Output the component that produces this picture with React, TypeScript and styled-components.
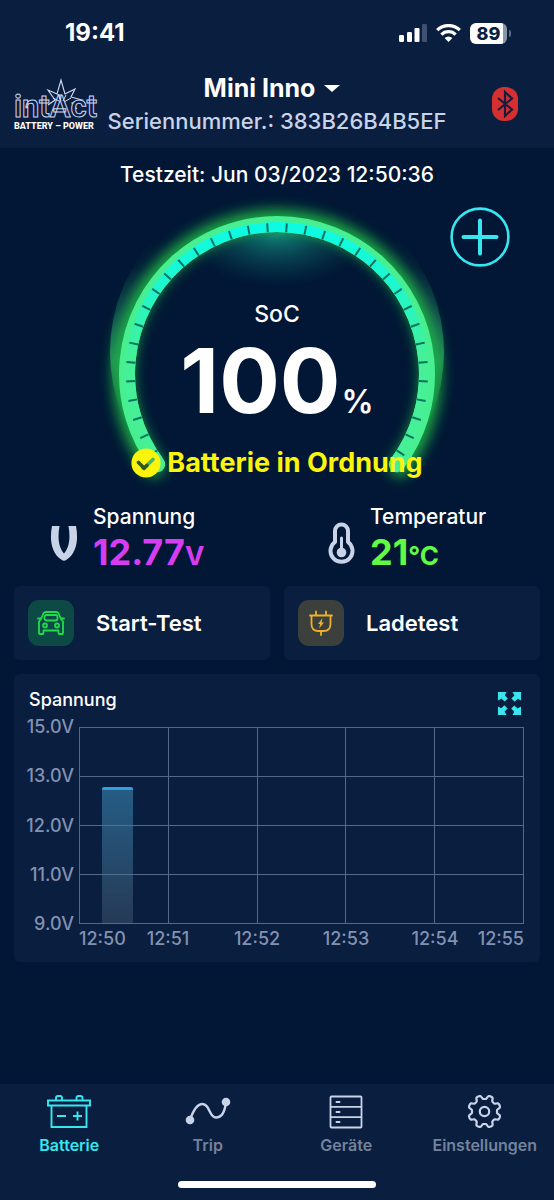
import React from "react";
import styled, { createGlobalStyle } from "styled-components";

const c = {
  page: "#011735",
  panel: "#0a1e40",
  cyan: "#37e6ef",
  soft: "#c9d3e8",
  axis: "#8391b0",
  grid: "#56678a",
  muted: "#74829b",
};

const Global = createGlobalStyle`
  *, *::before, *::after { box-sizing: border-box; }
  body { margin: 0; background: ${c.page}; }
  button { font: inherit; color: inherit; background: none; border: 0; padding: 0; cursor: pointer; }
  h1, h2, p, dl, dt, dd { margin: 0; font: inherit; }
  svg { display: block; flex: none; }
`;

const Screen = styled.div`
  min-height: 100vh;
  display: flex;
  flex-direction: column;
  background: ${c.page};
  color: #fff;
  font-family: Inter, "Liberation Sans", sans-serif;
`;

/* ---------- header ---------- */

const Header = styled.header`
  background: ${c.panel};
  border-bottom: 1px solid #04142d;
  padding-bottom: 11px;
`;

const StatusBar = styled.div`
  display: flex;
  align-items: center;
  justify-content: space-between;
  padding: 16px 43px 0 65px;
  height: 50px;
`;

const Clock = styled.time`
  font-size: 24px;
  line-height: 28px;
  font-weight: 700;
`;

const StatusIcons = styled.div`
  display: flex;
  align-items: center;
  gap: 9px;
`;

const BatteryLevel = styled.div`
  display: flex;
  align-items: center;
  gap: 2px;
`;

const BatteryBody = styled.span`
  width: 37px;
  height: 21px;
  border-radius: 6px;
  background: linear-gradient(90deg, #fff 89%, #8b95a9 89%);
  color: ${c.panel};
  font-size: 18px;
  line-height: 21px;
  font-weight: 800;
  text-align: center;
`;

const BatteryTip = styled.span`
  width: 2px;
  height: 7px;
  border-radius: 0 2px 2px 0;
  background: #5d6b87;
`;

const HeaderRow = styled.div`
  display: grid;
  grid-template-columns: minmax(0, 1fr) auto minmax(0, 1fr);
  align-items: center;
  padding: 21px 14px 0;
`;

const Titles = styled.div`
  display: flex;
  flex-direction: column;
  align-items: center;
`;

const DevicePicker = styled.button`
  display: flex;
  align-items: center;
  gap: 9px;
  margin-right: 10px;
  font-size: 25px;
  line-height: 34px;
  font-weight: 700;
`;

const Serial = styled.p`
  font-size: 22px;
  line-height: 32px;
  font-weight: 500;
  color: ${c.soft};
  white-space: nowrap;
`;

const BluetoothButton = styled.button`
  justify-self: end;
  margin-right: 22px;
`;

/* ---------- gauge ---------- */

const Hero = styled.section`
  position: relative;
  display: flex;
  flex-direction: column;
  align-items: center;
`;

const TestTime = styled.p`
  padding: 12px 0 1px;
  font-size: 21px;
  line-height: 28px;
  font-weight: 500;
`;

const AddButton = styled.button`
  position: absolute;
  top: 58px;
  right: 44px;
`;

const Gauge = styled.div`
  display: grid;
  justify-items: center;
  & > * { grid-area: 1 / 1; }
`;

const Reading = styled.div`
  display: flex;
  flex-direction: column;
  align-items: center;
  padding-top: 109px;
`;

const ReadingLabel = styled.h1`
  font-size: 23px;
  line-height: 30px;
  font-weight: 500;
`;

const ReadingValue = styled.p`
  display: flex;
  align-items: baseline;
  gap: 1px;
  font-size: 90px;
  line-height: 104px;
  font-weight: 700;
`;

const Percent = styled.span`
  font-size: 32px;
  line-height: 32px;
  font-weight: 600;
`;

const Health = styled.p`
  display: flex;
  align-items: center;
  gap: 6px;
  margin-top: 12px;
  color: #fbf50d;
  font-size: 27px;
  line-height: 36px;
  font-weight: 700;
`;

/* ---------- metrics ---------- */

const Metrics = styled.dl`
  display: grid;
  grid-template-columns: 1fr 1fr;
  padding-top: 14px;
`;

const Metric = styled.div`
  display: grid;
  grid-template-columns: 28px 1fr;
  column-gap: 15px;
  align-items: center;
  padding-left: 50px;
  & > svg { grid-row: 1 / 3; margin-top: 6px; }
`;

const MetricLabel = styled.dt`
  font-size: 21px;
  line-height: 26px;
  font-weight: 500;
`;

const MetricValue = styled.dd<{ $color: string }>`
  color: ${(p) => p.$color};
  font-size: 36px;
  line-height: 44px;
  font-weight: 700;
`;

const Unit = styled.span`
  font-size: 26px;
`;

/* ---------- cards ---------- */

const Content = styled.div`
  display: flex;
  flex-direction: column;
  gap: 14px;
  padding: 8px 14px 24px;
`;

const Actions = styled.div`
  display: grid;
  grid-template-columns: 1fr 1fr;
  gap: 14px;
`;

const ActionCard = styled.button`
  display: flex;
  align-items: center;
  gap: 22px;
  padding: 14px;
  border-radius: 6px;
  background: ${c.panel};
  font-size: 22px;
  line-height: 28px;
  font-weight: 600;
`;

const IconTile = styled.span<{ $bg: string }>`
  display: grid;
  place-items: center;
  width: 46px;
  height: 46px;
  border-radius: 11px;
  background: ${(p) => p.$bg};
`;

const ChartCard = styled.section`
  border-radius: 6px;
  background: ${c.panel};
  padding: 14px 16px 13px 15px;
`;

const ChartHead = styled.div`
  display: flex;
  justify-content: space-between;
  height: 39px;
`;

const ChartTitle = styled.h2`
  font-size: 18px;
  line-height: 24px;
  font-weight: 500;
`;

const ExpandButton = styled.button`
  align-self: flex-start;
  margin: 4px 3px 0 0;
`;

const ChartBody = styled.div`
  display: grid;
  grid-template-columns: 45px minmax(0, 1fr);
  column-gap: 5px;
`;

const YAxis = styled.div`
  display: flex;
  flex-direction: column;
  justify-content: space-between;
  align-items: flex-end;
  margin: -10px 0;
`;

const Tick = styled.span`
  font-size: 18px;
  line-height: 20px;
  font-weight: 500;
  color: ${c.axis};
`;

const Plot = styled.div`
  position: relative;
  display: grid;
  grid-template-columns: repeat(5, 1fr);
  grid-auto-rows: 49px;
  border-top: 1px solid ${c.grid};
  border-left: 1px solid ${c.grid};
`;

const Cell = styled.span`
  border-right: 1px solid ${c.grid};
  border-bottom: 1px solid ${c.grid};
`;

const Bar = styled.span`
  position: absolute;
  left: 5%;
  bottom: 0;
  width: 7%;
  height: 70%;
  border-top: 3px solid #2f9fe0;
  border-radius: 2px 2px 0 0;
  background: linear-gradient(rgba(55, 130, 175, 0.62), rgba(90, 110, 125, 0.35));
`;

const XAxis = styled.div`
  grid-column: 2;
  display: grid;
  grid-template-columns: minmax(0, 1fr) repeat(4, minmax(0, 2fr)) minmax(0, 1fr);
  justify-items: center;
  padding-top: 5px;
  & > :first-child { justify-self: start; }
  & > :last-child { justify-self: end; }
`;

/* ---------- navigation ---------- */

const Nav = styled.nav`
  margin-top: auto;
  background: ${c.panel};
  padding: 9px 0 12px;
`;

const NavItems = styled.div`
  display: grid;
  grid-template-columns: repeat(4, 1fr);
`;

const NavLink = styled.a<{ $active?: boolean }>`
  display: flex;
  flex-direction: column;
  align-items: center;
  gap: 6px;
  color: ${(p) => (p.$active ? c.cyan : c.muted)};
  font-size: 16px;
  line-height: 20px;
  font-weight: 600;
  text-decoration: none;
`;

const HomeIndicator = styled.div`
  width: 198px;
  height: 7px;
  margin: 26px auto 0;
  border-radius: 4px;
  background: #fff;
`;

/* ---------- drawings ---------- */

const Signal = () => (
  <svg width="28" height="18" viewBox="0 0 28 18" fill="#fff" aria-hidden="true">
    <rect x="0" y="11" width="5" height="7" rx="1.3" />
    <rect x="8" y="8" width="5" height="10" rx="1.3" />
    <rect x="15.500" y="4" width="5" height="14" rx="1.3" />
    <rect x="23" y="0" width="5" height="18" rx="1.3" fill="#3f5070" />
  </svg>
);

const Wifi = () => (
  <svg width="25" height="18" viewBox="0 0 25 18" fill="none" stroke="#fff" strokeWidth="3.2" aria-hidden="true">
    <path d="M1.200 6.200a16 16 0 0 1 22.600 0" />
    <path d="M5.400 10.600a10 10 0 0 1 14.200 0" />
    <path d="M12.500 18 8.600 14a5.600 5.600 0 0 1 7.800 0z" fill="#fff" stroke="none" />
  </svg>
);

const Logo = () => (
  <svg width="84" height="52" viewBox="0 0 84 52" role="img" aria-label="intAct Battery-Power">
    <path
      d="M34 27 L41 22 L34 12 L43 16 L47 2 L51 16 L61 11 L57 19 L68 22 L58 25 L63 31"
      fill="none"
      stroke="#d3def5"
      strokeWidth="1.100"
    />
    <text
      x="0"
      y="39"
      fontFamily="Roboto, 'Liberation Sans', sans-serif"
      fontSize="31"
      fontWeight="600"
      fill={c.panel}
      stroke="#c6d3ee"
      strokeWidth="1"
    >
      intAct
    </text>
    <path d="M39 20 45 23M44 16l3 7M52 17l-3 6M57 20l-7 4" fill="none" stroke="#d3def5" strokeWidth="1" />
    <text x="0" y="51" fontFamily="Roboto, sans-serif" fontSize="9" fontWeight="800" fill="#fff">
      BATTERY – POWER
    </text>
  </svg>
);

const Bluetooth = () => (
  <svg width="26" height="34" viewBox="0 0 26 34" aria-hidden="true">
    <rect width="26" height="34" rx="12" fill="#d5302f" />
    <path d="M6 11 20 22.500 13 29V5l7 6.500L6 23" fill="none" stroke="#1b1c3d" strokeWidth="2.200" />
  </svg>
);

const Add = () => (
  <svg width="60" height="60" viewBox="0 0 60 60" fill="none" stroke={c.cyan} strokeLinecap="round" aria-hidden="true">
    <circle cx="30" cy="30" r="28.400" strokeWidth="2.600" />
    <path d="M30 13.500v33M13.500 30h33" strokeWidth="4" />
  </svg>
);

const CX = 190;
const CY = 184;
const SWEEP = 127;
const STEP = 52 / 7;

const polar = (r: number, deg: number) => {
  const a = (deg * Math.PI) / 180;
  return `${(CX + r * Math.sin(a)).toFixed(2)} ${(CY - r * Math.cos(a)).toFixed(2)}`;
};

const arc = (r: number, sweep: number) =>
  `M${polar(r, -sweep)} A${r} ${r} 0 ${sweep > 90 ? 1 : 0} 1 ${polar(r, sweep)}`;

const GaugeArc = () => (
  <svg width="380" height="300" viewBox="0 0 380 300" fill="none" aria-hidden="true">
    <defs>
      <linearGradient id="segments" gradientUnits="userSpaceOnUse" x1="0" y1="30" x2="0" y2="190">
        <stop offset="0" stopColor="#0cfbe4" />
        <stop offset="0.400" stopColor="#1df7cf" />
        <stop offset="0.850" stopColor="#45f096" />
      </linearGradient>
      <linearGradient id="halo" gradientUnits="userSpaceOnUse" x1="0" y1="50" x2="0" y2="270">
        <stop offset="0" stopColor="#2fb56b" stopOpacity="0" />
        <stop offset="0.120" stopColor="#2f9a78" stopOpacity="0.040" />
        <stop offset="0.300" stopColor="#2f9a78" stopOpacity="0.300" />
        <stop offset="0.550" stopColor="#2fb56b" stopOpacity="0.700" />
        <stop offset="0.800" stopColor="#1f9a4f" stopOpacity="0.200" />
        <stop offset="1" stopColor="#1f9a4f" stopOpacity="0" />
      </linearGradient>
      <radialGradient id="topLight">
        <stop offset="0" stopColor="#19b59b" stopOpacity="0.700" />
        <stop offset="1" stopColor="#0b5c62" stopOpacity="0" />
      </radialGradient>
      <filter id="glow" filterUnits="userSpaceOnUse" x="0" y="0" width="380" height="300">
        <feGaussianBlur stdDeviation="7" />
      </filter>
      <clipPath id="inside">
        <circle cx={CX} cy={CY} r="150" />
      </clipPath>
    </defs>
    <path
      fillRule="evenodd"
      fill="url(#halo)"
      d="M23 162a167 167 0 1 0 334 0a167 167 0 1 0-334 0zM32 184a158 158 0 1 0 316 0a158 158 0 1 0-316 0z"
    />
    <ellipse cx={CX} cy="42" rx="95" ry="55" fill="url(#topLight)" clipPath="url(#inside)" />
    <path d={arc(154, SWEEP)} stroke="#1fb045" strokeWidth="20" strokeLinecap="round" filter="url(#glow)" />
    <path d={arc(150, SWEEP)} stroke="#48ef90" strokeWidth="16" strokeLinecap="round" />
    <path d={arc(147, SWEEP - 1)} stroke="url(#segments)" strokeWidth="10" />
    {Array.from({ length: 34 }, (_, i) => {
      const deg = (i - 16.5) * STEP;
      return <path key={i} d={`M${polar(142, deg)} L${polar(151, deg)}`} stroke="#08715f" strokeWidth="2" />;
    })}
  </svg>
);

const Check = () => (
  <svg width="30" height="30" viewBox="0 0 30 30" aria-hidden="true">
    <circle cx="15" cy="15" r="14.600" fill="#fbf50d" />
    <path d="M7.500 14.500 13 20" fill="none" stroke="#2f5a1c" strokeWidth="3.600" strokeLinecap="round" />
    <path d="M13 20 22 11.500" fill="none" stroke="#43b866" strokeWidth="3.600" strokeLinecap="round" />
    <path d="M12 19.500 13 20.200 16 17.400" fill="none" stroke="#2f5a1c" strokeWidth="3.600" strokeLinecap="round" />
  </svg>
);

const VoltIcon = () => (
  <svg width="28" height="44" viewBox="0 0 28 44" fill={c.soft} aria-hidden="true">
    <path d="M2 4h7.500C8 13 7.500 24 14 31.500C20.500 24 20 13 18.500 4H26C28.500 17 27 31 16.500 37.800Q14 39.500 11.500 37.800C1 31-.5 17 2 4z" />
  </svg>
);

const Thermometer = () => (
  <svg width="28" height="44" viewBox="0 0 28 44" fill="none" stroke={c.soft} aria-hidden="true">
    <path d="M8 20V9a6.500 6.500 0 0 1 13 0v11a11 11 0 1 1-13 0z" strokeWidth="4" strokeLinejoin="round" />
    <path d="M14.500 16v14" strokeWidth="3" strokeLinecap="round" />
    <circle cx="14.500" cy="30.500" r="4.800" fill={c.soft} stroke="none" />
  </svg>
);

const Car = () => (
  <svg width="28" height="26" viewBox="0 0 28 26" fill="none" stroke="#25d94f" strokeWidth="1.800" strokeLinejoin="round" strokeLinecap="round" aria-hidden="true">
    <path d="M4 9 6.500 3.500Q7.300 2 9 2h10q1.700 0 2.500 1.500L24 9l2 2.500V23q0 1-1 1h-2.500q-1 0-1-1v-2.500h-15V23q0 1-1 1H3q-1 0-1-1V11.500z" />
    <path d="M1 8.500h3M24 8.500h3" />
    <rect x="7.500" y="5" width="13" height="5.500" rx="2" />
    <circle cx="8" cy="15.500" r="2" />
    <circle cx="20" cy="15.500" r="2" />
  </svg>
);

const Plug = () => (
  <svg width="26" height="26" viewBox="0 0 26 26" fill="none" stroke="#efb12b" strokeWidth="1.800" strokeLinecap="round" aria-hidden="true">
    <path d="M2 5.500h22M3.500 5.500V14q0 7 7 7h5q7 0 7-7V5.500M8 1.500v4M18 1.500v4M13 21v4" />
    <path d="M14.500 8 10 14h2.200L11 18.500 16 12.500h-2.400z" fill="#efb12b" stroke="none" />
  </svg>
);

const Expand = () => (
  <svg width="23" height="23" viewBox="0 0 23 23" fill={c.cyan} aria-hidden="true">
    {[0, 90, 180, 270].map((r) => (
      <path key={r} transform={`rotate(${r} 11.500 11.500)`} d="M0 0h8.500L6.800 3.200 9.800 6.400 6.600 9.600 3.400 6.600 0 8.500z" />
    ))}
  </svg>
);

const BatteryIcon = () => (
  <svg width="46" height="36" viewBox="0 0 46 36" fill="none" stroke={c.cyan} strokeWidth="1.900" aria-hidden="true">
    <path d="M2 7.500h42v5H2zM5.500 12.500V34h35V12.500" />
    <path d="M10 7.500V5q0-2 2-2h2q2 0 2 2v2.500M30.500 7.500V5q0-2 2-2h2q2 0 2 2v2.500" />
    <path d="M11 23h9M27 23h9M31.500 18.500v9" />
  </svg>
);

const TripIcon = () => (
  <svg width="46" height="36" viewBox="0 0 46 36" fill="none" stroke={c.soft} strokeWidth="2.400" aria-hidden="true">
    <path d="M5 27C8 18 12 11 17.500 11C25 11 24 24.500 31 24.500C37 24.500 40 18 41 9" />
    <circle cx="5" cy="27" r="4.300" fill={c.soft} stroke="none" />
    <circle cx="41" cy="9" r="4.300" fill={c.soft} stroke="none" />
  </svg>
);

const DevicesIcon = () => (
  <svg width="46" height="36" viewBox="0 0 46 36" fill="none" stroke={c.soft} strokeWidth="1.800" aria-hidden="true">
    <rect x="7.500" y="3.500" width="31" height="31" rx="1" />
    <path d="M7.500 13.800h31M7.500 24.200h31" />
    <path d="M13.500 9h3M13.500 19h3M13.500 29h3" strokeLinecap="round" strokeWidth="2" />
  </svg>
);

const gearPath = (() => {
  const pts: string[] = [];
  for (let i = 0; i <= 160; i++) {
    const t = (i / 160) * Math.PI * 2;
    const wave = Math.tanh(2.2 * Math.cos(8 * t)) / Math.tanh(2.2);
    const r = 14.4 + 1.9 * wave;
    const a = t + Math.PI / 8;
    pts.push(`${(22.5 + r * Math.cos(a)).toFixed(2)} ${(18.5 + r * Math.sin(a)).toFixed(2)}`);
  }
  return `M${pts.join("L")}z`;
})();

const GearIcon = () => (
  <svg width="46" height="36" viewBox="0 0 46 36" fill="none" stroke={c.soft} strokeWidth="2.200" strokeLinejoin="round" aria-hidden="true">
    <path d={gearPath} />
    <circle cx="22.500" cy="18.500" r="4.700" />
  </svg>
);

const volts = ["15.0V", "13.0V", "12.0V", "11.0V", "9.0V"];
const times = ["12:50", "12:51", "12:52", "12:53", "12:54", "12:55"];
const tabs = [
  { label: "Batterie", Icon: BatteryIcon, active: true },
  { label: "Trip", Icon: TripIcon },
  { label: "Geräte", Icon: DevicesIcon },
  { label: "Einstellungen", Icon: GearIcon },
];

export default function App() {
  return (
    <Screen>
      <Global />
      <Header>
        <StatusBar>
          <Clock>19:41</Clock>
          <StatusIcons>
            <Signal />
            <Wifi />
            <BatteryLevel>
              <BatteryBody>89</BatteryBody>
              <BatteryTip />
            </BatteryLevel>
          </StatusIcons>
        </StatusBar>
        <HeaderRow>
          <Logo />
          <Titles>
            <DevicePicker>
              Mini Inno
              <svg width="16" height="7" viewBox="0 0 16 7" fill="#fff" aria-hidden="true">
                <path d="M0 0h16L8 7z" />
              </svg>
            </DevicePicker>
            <Serial>Seriennummer.: 383B26B4B5EF</Serial>
          </Titles>
          <BluetoothButton aria-label="Bluetooth">
            <Bluetooth />
          </BluetoothButton>
        </HeaderRow>
      </Header>

      <main>
        <Hero>
          <TestTime>Testzeit: Jun 03/2023 12:50:36</TestTime>
          <Gauge>
            <GaugeArc />
            <Reading>
              <ReadingLabel>SoC</ReadingLabel>
              <ReadingValue>
                100<Percent>%</Percent>
              </ReadingValue>
              <Health>
                <Check />
                Batterie in Ordnung
              </Health>
            </Reading>
          </Gauge>
          <AddButton aria-label="Hinzufügen">
            <Add />
          </AddButton>
        </Hero>

        <Metrics>
          <Metric>
            <VoltIcon />
            <MetricLabel>Spannung</MetricLabel>
            <MetricValue $color="#d63df2">
              12.77<Unit>V</Unit>
            </MetricValue>
          </Metric>
          <Metric>
            <Thermometer />
            <MetricLabel>Temperatur</MetricLabel>
            <MetricValue $color="#62fb43">
              21<Unit>°C</Unit>
            </MetricValue>
          </Metric>
        </Metrics>

        <Content>
          <Actions>
            <ActionCard>
              <IconTile $bg="#0d4a45">
                <Car />
              </IconTile>
              Start-Test
            </ActionCard>
            <ActionCard>
              <IconTile $bg="#3b403d">
                <Plug />
              </IconTile>
              Ladetest
            </ActionCard>
          </Actions>

          <ChartCard>
            <ChartHead>
              <ChartTitle>Spannung</ChartTitle>
              <ExpandButton aria-label="Vergrößern">
                <Expand />
              </ExpandButton>
            </ChartHead>
            <ChartBody>
              <YAxis>
                {volts.map((v) => (
                  <Tick key={v}>{v}</Tick>
                ))}
              </YAxis>
              <Plot>
                {Array.from({ length: 20 }, (_, i) => (
                  <Cell key={i} />
                ))}
                <Bar />
              </Plot>
              <XAxis>
                {times.map((t) => (
                  <Tick key={t}>{t}</Tick>
                ))}
              </XAxis>
            </ChartBody>
          </ChartCard>
        </Content>
      </main>

      <Nav>
        <NavItems>
          {tabs.map(({ label, Icon, active }) => (
            <NavLink key={label} href="#" $active={active}>
              <Icon />
              {label}
            </NavLink>
          ))}
        </NavItems>
        <HomeIndicator />
      </Nav>
    </Screen>
  );
}
